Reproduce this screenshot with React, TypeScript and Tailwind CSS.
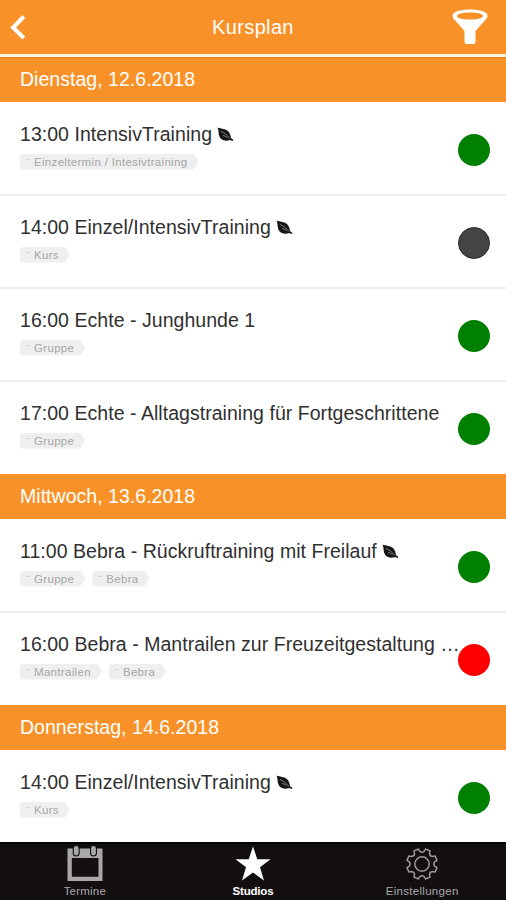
import React from "react";

type Course = { title: string; leaf?: boolean; tags: string[]; color: string };
type Day = { date: string; courses: Course[] };

const GREEN = "bg-[#008000]";

const days: Day[] = [
  {
    date: "Dienstag, 12.6.2018",
    courses: [
      { title: "13:00 IntensivTraining", leaf: true, tags: ["Einzeltermin / Intesivtraining"], color: GREEN },
      { title: "14:00 Einzel/IntensivTraining", leaf: true, tags: ["Kurs"], color: "bg-[#444444] border border-[#2c2c2c]" },
      { title: "16:00 Echte - Junghunde 1", tags: ["Gruppe"], color: GREEN },
      { title: "17:00 Echte - Alltagstraining für Fortgeschrittene", tags: ["Gruppe"], color: GREEN },
    ],
  },
  {
    date: "Mittwoch, 13.6.2018",
    courses: [
      { title: "11:00 Bebra - Rückruftraining mit Freilauf", leaf: true, tags: ["Gruppe", "Bebra"], color: GREEN },
      { title: "16:00 Bebra - Mantrailen zur Freuzeitgestaltung …", tags: ["Mantrailen", "Bebra"], color: "bg-[#ff0000]" },
    ],
  },
  {
    date: "Donnerstag, 14.6.2018",
    courses: [{ title: "14:00 Einzel/IntensivTraining", leaf: true, tags: ["Kurs"], color: GREEN }],
  },
];

// Outline of an eight-toothed gear centred on 18,18, with a gap facing up.
const point = (radius: number, degrees: number) => {
  const a = (degrees * Math.PI) / 180;
  return `${(18 + radius * Math.cos(a)).toFixed(2)} ${(18 + radius * Math.sin(a)).toFixed(2)}`;
};
const gearPath =
  Array.from({ length: 8 }, (_, k) => {
    const a = 22.5 + 45 * k;
    return `${k === 0 ? "M" : "L"}${point(12.8, a - 13)}L${point(15.4, a - 9)}L${point(15.4, a + 9)}L${point(12.8, a + 13)}Q${point(11, a + 22.5)} ${point(12.8, a + 32)}`;
  }).join("") + "Z";

function Leaf() {
  return (
    <svg className="ml-[5px] h-[16px] w-[17px] shrink-0" viewBox="0 0 17 16">
      <path d="M.5.5C4 2 8 1.500 11 4c2.300 2 2.500 5 3.200 7.200L16.500 13l-.8 1-2.600-1C9.500 14.500 5.500 13.800 3.300 11 1 8 2.200 4 .5.500Z" fill="#161616" />
      <path d="M4 4.500c3 1.200 6 3.500 9 7M6 8.500c1.500.2 3 1 4.500 2.200" stroke="#8b8b8b" strokeWidth=".9" fill="none" />
    </svg>
  );
}

function Tag({ label }: { label: string }) {
  return (
    <span className="flex h-[16px] items-center rounded-l-[4px] bg-[#efefef] pr-[11px] pl-[6px] text-[11.500px] leading-[16px] tracking-[0.320px] whitespace-nowrap text-[#a6a6a6] [clip-path:polygon(0_0,calc(100%-5px)_0,100%_50%,calc(100%-5px)_100%,0_100%)]">
      <span className="mr-[4px] mb-[4px] h-px w-[4px] bg-[#d2d2d2]" />
      {label}
    </span>
  );
}

function CourseRow({ course, first, last }: { course: Course; first: boolean; last: boolean }) {
  const height = first && !last ? "h-[94px]" : last && !first ? "h-[92px]" : "h-[93px]";
  return (
    <li className={`flex items-start bg-white pr-4 pl-5 ${height} ${first ? "pt-[20px]" : "pt-[19px]"} ${last ? "" : "border-b-2 border-[#ededed]"}`}>
      <div className="w-[438px] shrink-0">
        <div className="flex h-[25px] items-center text-[19.500px] leading-[25px] tracking-[0.040px] whitespace-nowrap text-[#303030]">
          <span>{course.title}</span>
          {course.leaf && <Leaf />}
        </div>
        <div className="mt-[6.500px] flex gap-[7px]">
          {course.tags.map((t) => (
            <Tag key={t} label={t} />
          ))}
        </div>
      </div>
      <span className={`mt-[12px] size-8 shrink-0 rounded-full ${course.color}`} />
    </li>
  );
}

export default function App() {
  return (
    <div className="flex h-[900px] w-[506px] flex-col overflow-hidden bg-white font-['Liberation_Sans',Arial,sans-serif]">
      <header className="grid h-[57px] shrink-0 grid-cols-3 items-start border-b-[3px] border-[#fff3df] bg-[#f89228] text-white">
        <svg className="mt-[14px] ml-[9px] h-[27px] w-[18px]" viewBox="0 0 18 27" fill="none" stroke="white" strokeWidth="4">
          <path d="M14.800 2.500 4.200 13.500 14.800 24" />
        </svg>
        <h1 className="mt-[14px] text-center text-[20px] leading-[26px] tracking-[0.350px]">Kursplan</h1>
        <svg className="mt-[9px] mr-[18px] h-[36px] w-[36px] justify-self-end" viewBox="0 0 36 36">
          <path fill="white" fillRule="evenodd" d="M18 .5c10 0 17.500 2.500 17.500 6.200 0 2-1 3-2.500 4.500L23.500 22v10.500q0 2.500-2.500 2.500h-6q-2.500 0-2.500-2.500V22L3 11.200C1.500 9.700.5 8.700.5 6.700.5 3 8 .5 18 .5ZM18 3.500c-7.500 0-13 1.500-13 3.500s5.500 3.500 13 3.500 13-1.500 13-3.500-5.500-3.500-13-3.500Z" />
        </svg>
      </header>
      <main className="h-[785px] shrink-0">
        {days.map((day, d) => (
          <section key={day.date}>
            <h2
              className={`h-[45px] border-t bg-[#f89228] pl-5 text-[19.500px] leading-[43px] tracking-[0.030px] text-white ${d === 0 ? "border-[#e5841c]" : "border-[#f89228]"}`}
            >
              {day.date}
            </h2>
            <ul>
              {day.courses.map((c, i) => (
                <CourseRow key={c.title} course={c} first={i === 0} last={i === day.courses.length - 1} />
              ))}
            </ul>
          </section>
        ))}
      </main>
      <nav className="grid flex-1 grid-cols-3 border-t-2 border-black bg-[#130f11] text-[11.500px] leading-[14px] text-[#a9a6a8]">
        <div className="flex flex-col items-center pt-[2px]">
          <svg className="ml-px h-[36px] w-[36px]" viewBox="0 0 36 36">
            <path fill="#aaa7a9" fillRule="evenodd" d="M.5 2.500h35V35H.5ZM4.800 12v18.800h26.700V12Z" />
            <path d="M9.200 2.500v4.500M26.500 2.500v4.500" stroke="#130f11" strokeWidth="7" strokeLinecap="round" />
            <path d="M9.200 2.500v4.500M26.500 2.500v4.500" stroke="#aaa7a9" strokeWidth="4.800" strokeLinecap="round" />
          </svg>
          <span className="mt-[2px] ml-px tracking-[0.200px]">Termine</span>
        </div>
        <div className="flex flex-col items-center pt-[2px] font-bold text-white">
          <svg className="h-[36px] w-[36px]" viewBox="0 0 36 36">
            <path fill="white" d="m18 .5 4.300 12.700H35.500L25 21.200l4 13.300L18 26.500 7 34.500l4-13.300L.5 13.200h13.200Z" />
          </svg>
          <span className="mt-[2px] tracking-[-0.200px]">Studios</span>
        </div>
        <div className="flex flex-col items-center pt-[2px]">
          <svg className="ml-px h-[36px] w-[36px]" viewBox="0 0 36 36" fill="none" stroke="#9c999b" strokeWidth="1.500" strokeLinejoin="round">
            <circle cx="18" cy="18" r="7.200" />
            <path d={gearPath} />
          </svg>
          <span className="mt-[2px] ml-px tracking-[0.300px]">Einstellungen</span>
        </div>
      </nav>
    </div>
  );
}
